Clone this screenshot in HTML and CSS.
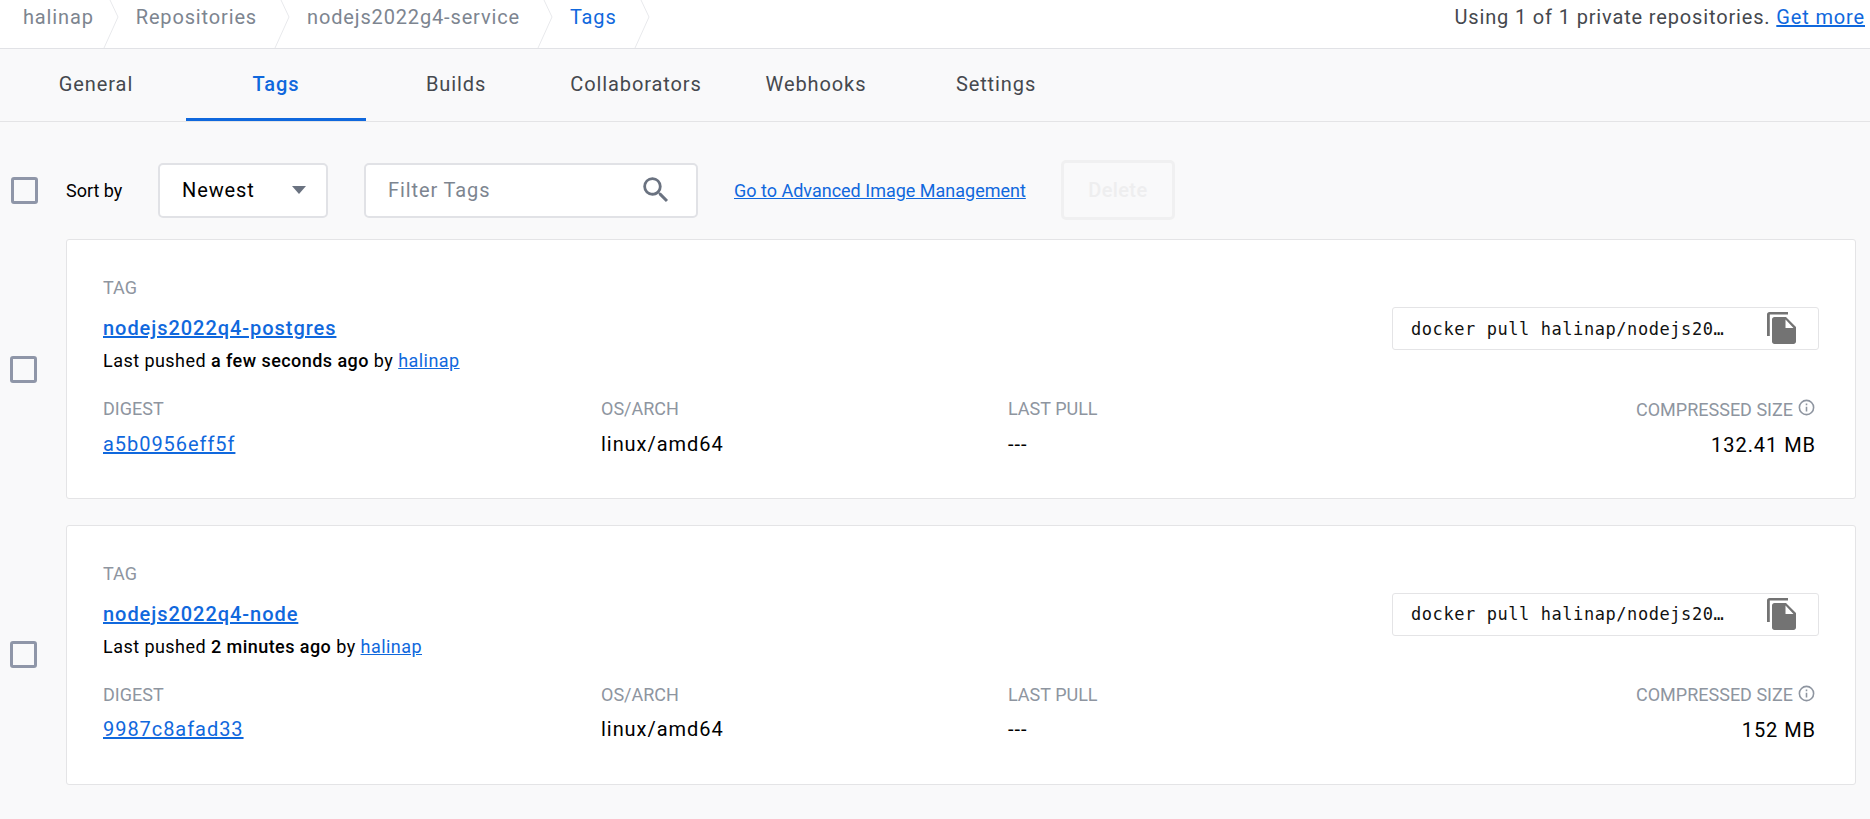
FILE: index.html
```html
<!DOCTYPE html>
<html lang="en">
<head>
<meta charset="utf-8">
<title>Tags</title>
<link rel="stylesheet" href="styles.css">
</head>
<body>
<header class="topbar">
  <nav class="crumbs">
    <a class="crumb">halinap</a>
    <svg class="sep first" viewBox="0 0 16 48"><path d="M7 0l8 17L1 48"/></svg>
    <a class="crumb">Repositories</a>
    <svg class="sep" viewBox="0 0 16 48"><path d="M7 0l8 17L1 48"/></svg>
    <a class="crumb">nodejs2022g4-service</a>
    <svg class="sep" viewBox="0 0 16 48"><path d="M7 0l8 17L1 48"/></svg>
    <a class="crumb current">Tags</a>
    <svg class="sep" viewBox="0 0 16 48"><path d="M7 0l8 17L1 48"/></svg>
  </nav>
  <p class="usage">Using 1 of 1 private repositories. <a class="link" href="#">Get more</a></p>
</header>
<nav class="tabs">
  <a class="tab">General</a>
  <a class="tab active">Tags</a>
  <a class="tab">Builds</a>
  <a class="tab">Collaborators</a>
  <a class="tab">Webhooks</a>
  <a class="tab">Settings</a>
</nav>
<main class="content">
  <div class="toolbar">
    <span class="checkbox"></span>
    <span class="sort-label">Sort by</span>
    <div class="select"><span>Newest</span><span class="caret"></span></div>
    <div class="filter">
      <span>Filter Tags</span>
      <svg class="search" viewBox="0 0 24 24"><path d="M15.5 14h-.79l-.28-.27A6.47 6.47 0 0 0 16 9.5 6.5 6.5 0 1 0 9.5 16c1.61 0 3.09-.59 4.23-1.57l.27.28v.79l5 4.99L20.49 19l-4.99-5zm-6 0C7.01 14 5 11.99 5 9.5S7.01 5 9.5 5 14 7.01 14 9.5 11.99 14 9.5 14z"/></svg>
    </div>
    <a class="link advanced" href="#">Go to Advanced Image Management</a>
    <button class="delete" type="button">Delete</button>
  </div>

  <div class="row">
    <div class="check-col"><span class="checkbox"></span></div>
    <article class="card">
      <div class="card-head">
        <div>
          <div class="label">TAG</div>
          <a class="link tag-name" href="#">nodejs2022q4-postgres</a>
          <p class="pushed">Last pushed <b>a few seconds ago</b> by <a class="link" href="#">halinap</a></p>
        </div>
        <div class="pull">
          <span class="pull-text">docker pull halinap/nodejs20…</span>
          <svg class="copy" viewBox="0 0 29 33"><path d="M0 24V2.500C0 1 1 0 2.500 0H21v2.600H2.800V24z"/><path fill-rule="evenodd" d="M7.500 5H19L29 15v14.500c0 1.400-1.100 2.500-2.500 2.500h-19C6.100 32 5 30.900 5 29.500v-22C5 6.100 6.100 5 7.500 5zM18.500 7.500V16h8z"/></svg>
        </div>
      </div>
      <div class="meta">
        <div><div class="label">DIGEST</div><a class="link value" href="#">a5b0956eff5f</a></div>
        <div><div class="label">OS/ARCH</div><div class="value">linux/amd64</div></div>
        <div><div class="label">LAST PULL</div><div class="value">---</div></div>
        <div class="right"><div class="label size-label">COMPRESSED SIZE<svg class="info" viewBox="0 0 24 24"><path d="M11 7h2v2h-2zm0 4h2v6h-2zm1-9a10 10 0 1 0 0 20 10 10 0 0 0 0-20zm0 18a8 8 0 1 1 0-16 8 8 0 0 1 0 16z"/></svg></div><div class="value">132.41 MB</div></div>
      </div>
    </article>
  </div>

  <div class="row">
    <div class="check-col"><span class="checkbox"></span></div>
    <article class="card">
      <div class="card-head">
        <div>
          <div class="label">TAG</div>
          <a class="link tag-name" href="#">nodejs2022q4-node</a>
          <p class="pushed">Last pushed <b>2 minutes ago</b> by <a class="link" href="#">halinap</a></p>
        </div>
        <div class="pull">
          <span class="pull-text">docker pull halinap/nodejs20…</span>
          <svg class="copy" viewBox="0 0 29 33"><path d="M0 24V2.500C0 1 1 0 2.500 0H21v2.600H2.800V24z"/><path fill-rule="evenodd" d="M7.500 5H19L29 15v14.500c0 1.400-1.100 2.500-2.500 2.500h-19C6.100 32 5 30.900 5 29.500v-22C5 6.100 6.100 5 7.500 5zM18.500 7.500V16h8z"/></svg>
        </div>
      </div>
      <div class="meta">
        <div><div class="label">DIGEST</div><a class="link value" href="#">9987c8afad33</a></div>
        <div><div class="label">OS/ARCH</div><div class="value">linux/amd64</div></div>
        <div><div class="label">LAST PULL</div><div class="value">---</div></div>
        <div class="right"><div class="label size-label">COMPRESSED SIZE<svg class="info" viewBox="0 0 24 24"><path d="M11 7h2v2h-2zm0 4h2v6h-2zm1-9a10 10 0 1 0 0 20 10 10 0 0 0 0-20zm0 18a8 8 0 1 1 0-16 8 8 0 0 1 0 16z"/></svg></div><div class="value">152 MB</div></div>
      </div>
    </article>
  </div>
</main>
</body>
</html>
```
FILE: styles.css
```css
* { box-sizing: border-box; }
html, body { margin: 0; height: 100%; }
body {
  background: #f9f9fa;
  color: #000;
  font-family: Roboto, "Liberation Sans", sans-serif;
  font-size: 20px;
  letter-spacing: .9px;
}
p { margin: 0; }
.link { color: #1068dd; text-decoration: underline; }

.topbar {
  height: 49px;
  background: #fff;
  border-bottom: 1px solid #e1e2e6;
  display: flex;
  justify-content: space-between;
  padding: 0 5px 0 0;
}
.crumbs { display: flex; align-items: flex-start; padding-left: 23px; letter-spacing: .85px; }
.crumb { height: 48px; line-height: 34px; color: #7d8590; }
.crumb.current { color: #1068dd; }
.sep { width: 16px; height: 48px; margin: 0 17px; flex: none; }
.sep.first { margin-left: 9px; }
.sep path { fill: none; stroke: #e8e9ec; stroke-width: 1; }
.usage { line-height: 34px; color: #45484e; letter-spacing: .85px; }

.tabs {
  display: flex;
  height: 73px;
  padding-left: 6px;
  border-bottom: 1px solid #e4e4e6;
}
.tab {
  width: 180px;
  height: 72px;
  line-height: 71px;
  text-align: center;
  color: #45484e;
}
.tab.active {
  color: #1068dd;
  font-weight: 500;
  border-bottom: 3px solid #1068dd;
}

.content { padding-right: 14px; }
.toolbar { display: flex; align-items: center; height: 78px; margin-top: 29px; padding-left: 11px; margin-bottom: 10px; }
.checkbox {
  display: block;
  width: 27px;
  height: 27px;
  background: #f9f9fa;
  border: 3px solid #8f96a8;
  border-radius: 3px;
  flex: none;
}
.sort-label { margin-left: 28px; width: 92px; font-size: 18px; letter-spacing: 0; }
.select, .filter {
  height: 55px;
  background: #fff;
  border: 2px solid #e1e2e6;
  border-radius: 5px;
  display: flex;
  align-items: center;
  justify-content: space-between;
}
.select { width: 170px; padding: 0 20px 0 22px; }
.caret { width: 0; height: 0; border: 7.5px solid transparent; border-top: 8px solid #6a7280; border-bottom: 0; }
.filter { width: 334px; margin-left: 36px; padding: 0 23px 0 22px; color: #7d8590; }
.search { width: 34px; height: 34px; fill: #6a7280; }
.advanced { margin-left: 36px; font-size: 18px; letter-spacing: 0; }
.delete {
  margin-left: 35px;
  width: 114px;
  height: 60px;
  background: transparent;
  border: 3px solid #f0f0f1;
  border-radius: 5px;
  color: #eeeeef;
  font: 500 20px Roboto, sans-serif;
  letter-spacing: .4px;
}

.row { display: flex; margin-bottom: 25.5px; }
.check-col { width: 66px; display: flex; align-items: center; padding-left: 10px; flex: none; }
.card {
  flex: 1;
  height: 260px;
  background: #fff;
  border: 1px solid #e4e4e6;
  border-radius: 3px;
  padding: 37px 36px 0;
}
.card-head { display: flex; justify-content: space-between; height: 121px; }
.label { font-size: 18px; line-height: 22px; color: #8e95a0; letter-spacing: 0; }
.tag-name { display: block; margin-top: 17px; font-weight: 500; line-height: 24px; letter-spacing: .95px; }
.pushed { margin-top: 10px; font-size: 18px; line-height: 22px; letter-spacing: .45px; }
.pushed b { font-weight: 500; }
.pull {
  margin-top: 30px;
  width: 427px;
  height: 43px;
  background: #fff;
  border: 1px solid #e4e4e6;
  border-radius: 3px;
  display: flex;
  align-items: center;
  justify-content: space-between;
  padding: 0 22px 0 18px;
}
.pull-text { font-family: "DejaVu Sans Mono", monospace; font-size: 17px; letter-spacing: .57px; color: #111; white-space: nowrap; }
.copy { width: 29px; height: 33px; flex: none; fill: #737373; }
.meta { display: grid; grid-template-columns: 498px 407px 1fr auto; padding-right: 3px; }
.meta .value { display: block; margin-top: 11.5px; line-height: 24px; letter-spacing: .95px; }
.right { text-align: right; }
.size-label { display: flex; justify-content: flex-end; align-items: center; gap: 4px; }
.info { width: 19px; height: 19px; fill: #8e95a0; margin-bottom: 4px; flex: none; }
```
